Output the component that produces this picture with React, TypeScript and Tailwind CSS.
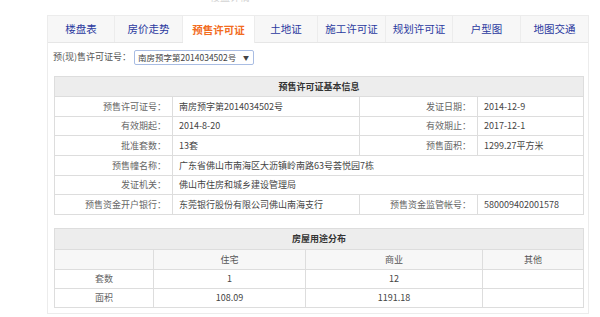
import React from "react";

const tabs = [
  { name: "楼盘表", w: "w-[67px]" },
  { name: "房价走势", w: "w-[68px]" },
  { name: "预售许可证", w: "w-[72px]", active: true },
  { name: "土地证", w: "w-[63px]" },
  { name: "施工许可证", w: "w-[68px]" },
  { name: "规划许可证", w: "w-[67px]" },
  { name: "户型图", w: "w-[68px]" },
  { name: "地图交通", w: "w-[67px]", last: true },
];

const rows: [string, string, string?, string?][] = [
  ["预售许可证号：", "南房预字第2014034502号", "发证日期：", "2014-12-9"],
  ["有效期起：", "2014-8-20", "有效期止：", "2017-12-1"],
  ["批准套数：", "13套", "预售面积：", "1299.27平方米"],
  ["预售幢名称：", "广东省佛山市南海区大沥镇岭南路63号荟悦园7栋"],
  ["发证机关：", "佛山市住房和城乡建设管理局"],
  ["预售资金开户银行：", "东莞银行股份有限公司佛山南海支行", "预售资金监管帐号：", "580009402001578"],
];

export default function App() {
  return (
    <div className="w-[600px] h-[317px] bg-white overflow-hidden font-['Noto_Sans_CJK_SC',sans-serif] text-[#333]">
      <div className="h-[15px] overflow-hidden">
        <div className="ml-[210px] -mt-[8px] text-[10px] leading-[10px] text-[#d4d4d4]">楼盘详情</div>
      </div>
      <div className="ml-[47px] w-[542px] h-[299px] border border-[#ececec]">
        <div className="flex h-[27px] bg-[#f7f7f7] border-b border-[#e6e6e6]">
          {tabs.map((t) => (
            <div
              key={t.name}
              className={`${t.w} flex items-center justify-center text-[10.5px] ${t.last ? "" : "border-r border-[#ececec]"} ${
                t.active ? "bg-white text-[#f26d1f] font-bold -mb-px" : "text-[#2b3aa0]"
              }`}
            >
              {t.name}
            </div>
          ))}
        </div>
        <div className="px-[6px] pr-[5px]">
          <div className="flex items-center h-[24px] pt-[4px] text-[9px] text-[#555]">
            <span className="-ml-[1px]">预(现)售许可证号：</span>
            <div className="ml-[3px] w-[120px] h-[15px] border border-[#a9bde3] rounded-[2px] flex items-center justify-between pl-[3px] pr-[4px] text-[8.5px] text-[#444]">
              <span>南房预字第2014034502号</span>
              <span className="text-[6px]">▼</span>
            </div>
          </div>
          <table className="mt-[9px] w-[529px] table-fixed border-collapse text-[9px]">
            <colgroup>
              <col className="w-[118px]" />
              <col className="w-[187px]" />
              <col className="w-[118px]" />
              <col className="w-[106px]" />
            </colgroup>
            <tbody>
              <tr className="h-[20px] bg-[#ededed]">
                <td colSpan={4} className="border border-[#dddddd] text-center font-bold text-[#333]">
                  预售许可证基本信息
                </td>
              </tr>
              {rows.map((r, i) => (
                <tr key={i} className="h-[19.7px]">
                  <td className="border border-[#dddddd] text-right pr-[6px] text-[#666]">{r[0]}</td>
                  {r[2] ? (
                    <>
                      <td className="border border-[#dddddd] pl-[6px] text-[#444]">{r[1]}</td>
                      <td className="border border-[#dddddd] text-right pr-[6px] text-[#666]">{r[2]}</td>
                      <td className="border border-[#dddddd] pl-[6px] text-[#444]">{r[3]}</td>
                    </>
                  ) : (
                    <td colSpan={3} className="border border-[#dddddd] pl-[6px] text-[#444]">{r[1]}</td>
                  )}
                </tr>
              ))}
            </tbody>
          </table>
          <table className="mt-[13px] w-[529px] table-fixed border-collapse text-[9px]">
            <colgroup>
              <col className="w-[99px]" />
              <col className="w-[152px]" />
              <col className="w-[177px]" />
              <col className="w-[101px]" />
            </colgroup>
            <tbody>
              <tr className="h-[21px] bg-[#ededed]">
                <td colSpan={4} className="border border-[#dddddd] text-center font-bold text-[#333]">
                  房屋用途分布
                </td>
              </tr>
              <tr className="h-[20px] bg-[#f7f7f7] text-[#555]">
                <td className="border border-[#dddddd]"></td>
                <td className="border border-[#dddddd] text-center">住宅</td>
                <td className="border border-[#dddddd] text-center">商业</td>
                <td className="border border-[#dddddd] text-center">其他</td>
              </tr>
              <tr className="h-[19px] text-[#444]">
                <td className="border border-[#dddddd] text-center text-[#666]">套数</td>
                <td className="border border-[#dddddd] text-center">1</td>
                <td className="border border-[#dddddd] text-center">12</td>
                <td className="border border-[#dddddd] text-center"></td>
              </tr>
              <tr className="h-[19px] text-[#444]">
                <td className="border border-[#dddddd] text-center text-[#666]">面积</td>
                <td className="border border-[#dddddd] text-center">108.09</td>
                <td className="border border-[#dddddd] text-center">1191.18</td>
                <td className="border border-[#dddddd] text-center"></td>
              </tr>
            </tbody>
          </table>
        </div>
      </div>
    </div>
  );
}
